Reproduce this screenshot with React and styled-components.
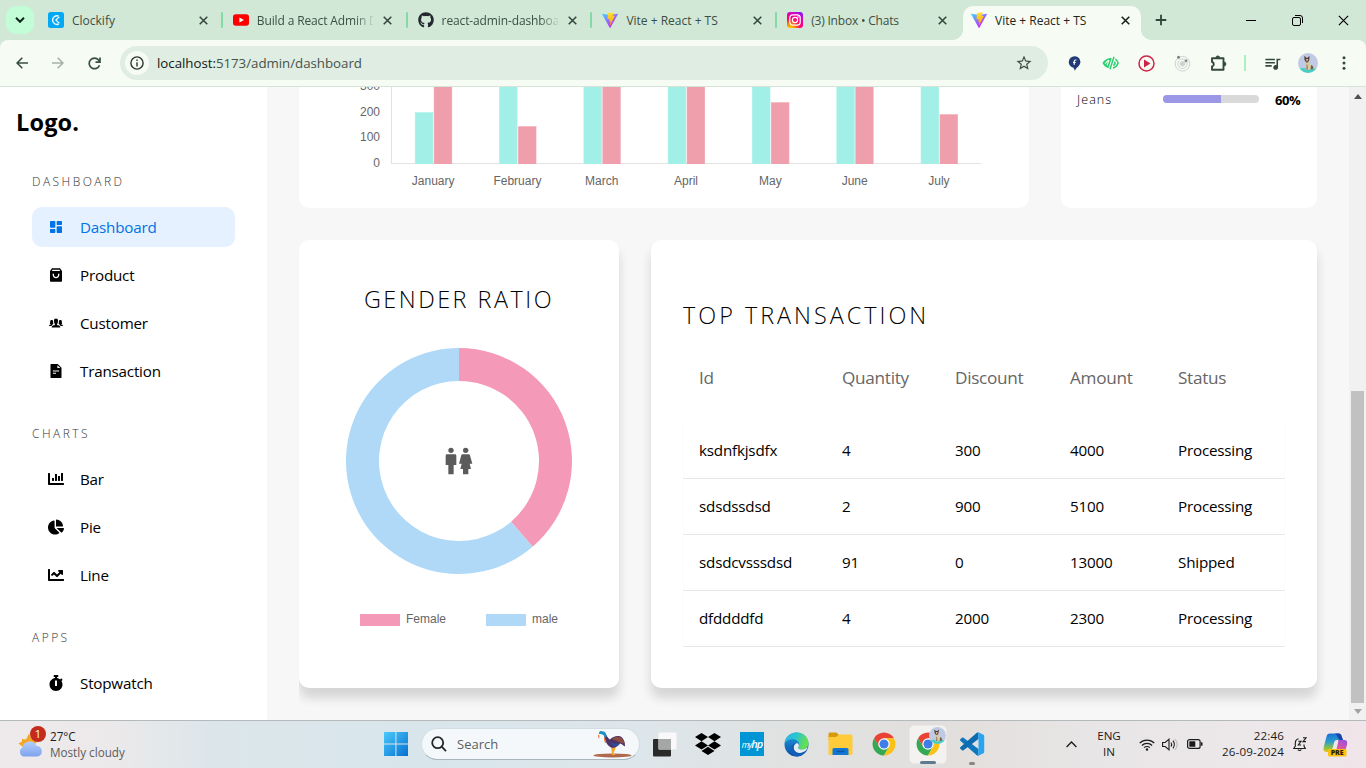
import React from "react";
import styled, { createGlobalStyle, css } from "styled-components";
import { RiDashboardFill, RiShoppingBag3Fill } from "react-icons/ri";
import { IoIosPeople } from "react-icons/io";
import { AiFillFileText } from "react-icons/ai";
import { FaChartBar, FaChartPie, FaChartLine, FaStopwatch, FaGithub, FaDropbox } from "react-icons/fa";
import { BiMaleFemale } from "react-icons/bi";
import { MdStarOutline, MdOutlineQueueMusic } from "react-icons/md";

const GlobalStyle = createGlobalStyle`
  * { box-sizing: border-box; margin: 0; padding: 0; }
  body { margin: 0; overflow: hidden; font-family: "Open Sans", "Noto Sans", sans-serif; }
  svg { display: block; flex: none; }
`;

const Screen = styled.div`
  width: 1366px;
  height: 768px;
  display: flex;
  flex-direction: column;
  overflow: hidden;
  background: #f6fbf4;
`;

const Slot = styled.div`
  flex: none;
  width: ${(p) => p.$w}px;
  display: flex;
  align-items: center;
  justify-content: center;
`;

/* ---------- Browser tabs ---------- */

const TabStrip = styled.div`
  flex: none;
  height: 40px;
  display: flex;
  align-items: center;
  background: #d2e8d6;
  padding-left: 6px;
`;

const TabSearch = styled.div`
  width: 28px;
  height: 28px;
  margin-right: 4px;
  border-radius: 10px;
  background: #c3fdd7;
  display: flex;
  align-items: center;
  justify-content: center;
`;

const TabItem = styled.div`
  position: relative;
  flex: none;
  display: flex;
  align-items: center;
  width: 184.8px;
  height: 40px;
  padding-left: 10px;
  color: #3c4f43;
  ${(p) =>
    p.$active
      ? css`
          width: 178px;
          height: 34px;
          align-self: flex-end;
          margin-left: 1px;
          padding: 0 0 6px 8px;
          background: #f6fbf4;
          border-radius: 10px 10px 0 0;
          color: #1c2620;
          &::before,
          &::after {
            content: "";
            position: absolute;
            bottom: 0;
            width: 10px;
            height: 10px;
          }
          &::before {
            left: -10px;
            background: radial-gradient(circle at 0 0, transparent 9.5px, #f6fbf4 10px);
          }
          &::after {
            right: -10px;
            background: radial-gradient(circle at 100% 0, transparent 9.5px, #f6fbf4 10px);
          }
        `
      : ""}
`;

const TabTitle = styled.span`
  flex: none;
  width: 116px;
  margin: 1px 7px 0 8px;
  font-size: 12px;
  line-height: 18px;
  letter-spacing: ${(p) => p.$ls || 0}px;
  white-space: nowrap;
  ${(p) => p.$fade && css`mask-image: linear-gradient(90deg, #000 84%, transparent 102%);`}
`;

const TabDivider = styled.i`
  width: 2px;
  height: 16px;
  margin-left: auto;
  border-radius: 1px;
  background: #86d9a5;
`;

const WindowControls = styled.div`
  margin-left: auto;
  display: flex;
`;

/* ---------- Browser toolbar ---------- */

const Toolbar = styled.div`
  flex: none;
  height: 47px;
  display: flex;
  align-items: center;
  padding-left: 4px;
  border-bottom: 1px solid #d6e3d8;
  border-radius: 8px 8px 0 0;
  background: #f6fbf4;
`;

const ToolbarBack = styled.div`
  flex: none;
  background: #d2e8d6;
`;

const AddressBar = styled.div`
  flex: none;
  width: 928px;
  height: 34px;
  margin: 0 8px;
  padding: 0 11px 0 5px;
  display: flex;
  align-items: center;
  border-radius: 17px;
  background: #e0ede2;
`;

const SiteInfo = styled.div`
  width: 24px;
  height: 24px;
  border-radius: 50%;
  background: #f6fbf4;
  display: flex;
  align-items: center;
  justify-content: center;
`;

const Url = styled.span`
  flex: 1;
  margin-left: 8px;
  font-size: 13.3px;
  line-height: 20px;
  letter-spacing: -0.03px;
  color: #46544b;
  b { font-weight: 400; color: #111a14; }
`;

const ToolDivider = styled.i`
  width: 2px;
  height: 16px;
  background: #a9f1c1;
`;

/* ---------- Page ---------- */

const Page = styled.div`
  flex: none;
  height: 633px;
  display: flex;
  background: #f7f7f7;
  overflow: hidden;
`;

const Sidebar = styled.aside`
  flex: none;
  width: 267px;
  padding: 19px 32px 0 16px;
  background: #fff;
`;

const Brand = styled.h2`
  height: 33px;
  margin-bottom: 34px;
  font-size: 23.5px;
  line-height: 33px;
  letter-spacing: 0.15px;
  font-weight: 700;
  color: #000;
`;

const NavSection = styled.section`
  padding-left: 16px;
  margin-bottom: 34px;
`;

const NavTitle = styled.h5`
  height: 18px;
  margin-bottom: 16px;
  font-size: 12px;
  line-height: 18px;
  font-weight: 300;
  letter-spacing: 2.45px;
  color: #333;
`;

const NavList = styled.ul`
  list-style: none;
  display: flex;
  flex-direction: column;
  gap: 8px;
`;

const NavItem = styled.li`
  height: 40px;
  padding: 0 16px;
  display: flex;
  align-items: center;
  gap: 16px;
  border-radius: 10px;
  font-size: 15.2px;
  letter-spacing: ${(p) => p.$ls ?? -0.2}px;
  background: ${(p) => (p.$active ? "#e5f1fe" : "transparent")};
  color: ${(p) => (p.$active ? "#0073e6" : "#000")};
  svg { width: 16px; height: 16px; }
`;

const Main = styled.main`
  flex: 1;
  padding: 0 32px;
  display: flex;
  flex-direction: column;
  gap: 32px;
`;

const Row = styled.div`
  display: flex;
  gap: 32px;
`;

const ChartCard = styled.section`
  width: 730px;
  height: 121px;
  border-radius: 0 0 10px 10px;
  background: #fff;
`;

const InventoryCard = styled.section`
  width: 256px;
  height: 121px;
  padding: 2px 16px 0;
  border-radius: 0 0 10px 10px;
  background: #fff;
`;

const InventoryItem = styled.div`
  height: 20px;
  display: flex;
  align-items: center;
  color: #000;
`;

const InventoryName = styled.span`
  width: 86px;
  font-size: 12.5px;
  font-weight: 300;
  letter-spacing: 1.1px;
`;

const Meter = styled.div`
  width: 96px;
  height: 8px;
  border-radius: 4px;
  background: #d9d9d9;
  overflow: hidden;
`;

const MeterFill = styled.div`
  height: 100%;
  background: #9b97e6;
`;

const InventoryValue = styled.b`
  margin: 1px 0 0 16px;
  font-size: 13px;
  letter-spacing: -0.4px;
  font-weight: 700;
`;

const Card = styled.section`
  height: 448px;
  border-radius: 10px;
  background: #fff;
  box-shadow: 0 10px 11px rgba(0, 0, 0, 0.14);
`;

const GenderCard = styled(Card)`
  width: 320px;
  display: flex;
  flex-direction: column;
  align-items: center;
  padding-top: 43px;
  clip-path: inset(-10px -32px -32px 0);
`;

const TransactionCard = styled(Card)`
  width: 666px;
  padding: 59px 32px 0;
`;

const Heading = styled.h2`
  height: 33px;
  font-size: 23.4px;
  line-height: 33px;
  font-weight: 300;
  letter-spacing: ${(p) => p.$ls}px;
  color: #000;
  white-space: nowrap;
`;

const DonutBox = styled.div`
  margin-top: 32px;
  display: grid;
  place-items: center;
  color: #5b5b5b;
  > svg { grid-area: 1 / 1; }
`;

const Legend = styled.div`
  margin-top: 37px;
  display: flex;
  gap: 40px;
  font: 12px/16px "Liberation Sans", Arial, sans-serif;
  color: #666;
`;

const LegendItem = styled.span`
  display: flex;
  align-items: center;
  gap: 6px;
  &::before {
    content: "";
    width: 40px;
    height: 12px;
    margin-top: 2px;
    background: ${(p) => p.$color};
  }
`;

const Table = styled.div`
  margin-top: 26px;
`;

const tableGrid = css`
  display: grid;
  grid-template-columns: 143px 113px 115px 108px 1fr;
  align-items: center;
  padding-left: 16px;
`;

const TableHead = styled.div`
  ${tableGrid}
  height: 41px;
  margin-bottom: 24px;
  padding-bottom: 2px;
  font-size: 17.2px;
  letter-spacing: -0.3px;
  font-weight: 400;
  color: #666;
`;

const TableRow = styled.div`
  ${tableGrid}
  height: 56px;
  border-bottom: 1px solid #e7e7e7;
  border-left: 1px solid #fbfbfb;
  border-right: 1px solid #fbfbfb;
  padding: 0 0 2px 15px;
  font-size: 15.2px;
  letter-spacing: -0.2px;
  color: #000;
`;

const ScrollTrack = styled.div`
  flex: none;
  width: 17px;
  display: flex;
  flex-direction: column;
  align-items: center;
  background: #f1f1f1;
  padding: 7px 0 6px;
`;

const ScrollThumb = styled.div`
  width: 13px;
  height: 312px;
  margin-top: auto;
  margin-bottom: 6px;
  background: #c1c1c1;
`;

/* ---------- Taskbar ---------- */

const Taskbar = styled.footer`
  flex: none;
  height: 48px;
  display: flex;
  align-items: center;
  padding-bottom: 1px;
  border-top: 1px solid #b4b9bb;
  background: linear-gradient(90deg, #eeeaeb 0, #ece9ea 110px, #dce6ea 210px, #d8e6ec 420px, #dde6ea 640px, #e0e2e2 780px, #e2dfdd 960px, #e8e5e6 1090px, #ece8ea 1240px, #f0e5e9 1366px);
`;

const Weather = styled.div`
  position: relative;
  width: 367px;
  padding-left: 18px;
  display: flex;
  align-items: center;
  gap: 7px;
  margin-right: 12px;
`;

const WeatherText = styled.div`
  font-size: 11.7px;
  line-height: 16px;
  color: #1b1b1b;
  small { display: block; font-size: 11.7px; color: #5c5c5c; }
`;

const Badge = styled.span`
  position: absolute;
  left: 30px;
  top: -2px;
  width: 16px;
  height: 16px;
  border-radius: 50%;
  background: #c42b1c;
  color: #fff;
  font-size: 11px;
  line-height: 16px;
  text-align: center;
`;

const SearchPill = styled.div`
  width: 219px;
  height: 32px;
  margin: 0 2px 0 8px;
  padding: 0 6px 0 9px;
  display: flex;
  align-items: center;
  border-radius: 16px;
  border: 1px solid #d3dde1;
  border-bottom-color: #a9b7bd;
  background: #f4f8fa;
  font-size: 13px;
  color: #5c5f61;
  span { flex: 1; margin-left: 10px; }
`;

const AppSlot = styled.div`
  position: relative;
  width: 44px;
  height: 47px;
  display: flex;
  align-items: center;
  justify-content: center;
`;

const ActiveTile = styled.div`
  position: relative;
  width: 38px;
  height: 39px;
  border-radius: 5px;
  background: #f3f2f1;
  border: 1px solid #e9e8e7;
  display: flex;
  align-items: center;
  justify-content: center;
`;

const TileAvatar = styled.div`
  position: absolute;
  right: 0;
  top: 1px;
`;

const Running = styled.i`
  position: absolute;
  left: 50%;
  bottom: ${(p) => p.$b}px;
  width: ${(p) => p.$w}px;
  height: 3px;
  border-radius: 2px;
  transform: translateX(-50%);
  background: ${(p) => p.$color};
`;

const HpTile = styled.div`
  width: 24px;
  height: 24px;
  background: #0096d6;
  color: #fff;
  font-size: 11px;
  line-height: 23px;
  font-style: italic;
  font-weight: 600;
  letter-spacing: -1px;
  text-align: center;
  small { font-size: 8.5px; font-weight: 400; }
`;

const Tray = styled.div`
  margin-left: auto;
  display: flex;
  align-items: center;
  font-size: 11.6px;
  line-height: 16px;
  color: #1b1b1b;
`;

const Language = styled.div`
  width: 50px;
  text-align: center;
`;

const Clock = styled.div`
  width: 75px;
  text-align: right;
  letter-spacing: 0.15px;
`;

/* ---------- Drawings ---------- */

const Close = ({ size = 9, color = "#33453a", w = 1.7 }) => (
  <svg width={size} height={size} viewBox="0 0 10 10" stroke={color} strokeWidth={w} fill="none">
    <path d="M.8.8 9.2 9.2M9.2.8.8 9.2" />
  </svg>
);

const ClockifyIcon = () => (
  <svg width="16" height="16" viewBox="0 0 16 16">
    <rect width="16" height="16" rx="2.5" fill="#03a9f4" />
    <path d="M10.7 4.2A4.3 4.3 0 1 0 10.7 12" fill="none" stroke="#fff" strokeWidth="1.4" />
    <path d="M8.6 7.3 11.4 4.9M8.6 8.9l2.8 2.3" stroke="#fff" strokeWidth="1.2" />
    <circle cx="8.3" cy="8.1" r="1" fill="#fff" />
  </svg>
);

const YoutubeIcon = () => (
  <svg width="16" height="16" viewBox="0 0 16 16">
    <rect y="2.2" width="16" height="11.6" rx="2.8" fill="#f00" />
    <path d="M6.4 5.4v5.2L10.9 8z" fill="#fff" />
  </svg>
);

const ViteIcon = () => (
  <svg width="16" height="16" viewBox="0 0 256 257">
    <defs>
      <linearGradient id="viteA" x1="0" x2=".6" y1=".08" y2=".8">
        <stop offset="0" stopColor="#41d1ff" />
        <stop offset="1" stopColor="#bd34fe" />
      </linearGradient>
      <linearGradient id="viteB" x1=".43" x2=".5" y1=".02" y2=".89">
        <stop offset="0" stopColor="#ffea83" />
        <stop offset=".08" stopColor="#ffdd35" />
        <stop offset="1" stopColor="#ffa800" />
      </linearGradient>
    </defs>
    <path fill="url(#viteA)" d="M255.153 37.938L134.897 252.976c-2.483 4.44-8.862 4.466-11.382.048L.875 37.958c-2.746-4.814 1.371-10.646 6.827-9.67l120.385 21.517a6.537 6.537 0 0 0 2.322-.004l117.867-21.483c5.438-.991 9.574 4.796 6.877 9.62Z" />
    <path fill="url(#viteB)" d="M185.432.063L96.44 17.501a3.268 3.268 0 0 0-2.634 3.014l-5.474 92.456a3.268 3.268 0 0 0 3.997 3.378l24.777-5.718c2.318-.535 4.413 1.507 3.936 3.838l-7.361 36.047c-.495 2.426 1.782 4.5 4.151 3.78l15.304-4.649c2.372-.72 4.652 1.36 4.15 3.788l-11.698 56.621c-.732 3.542 3.979 5.473 5.943 2.437l1.313-2.028l72.516-144.72c1.215-2.423-.88-5.186-3.54-4.672l-25.505 4.922c-2.396.462-4.435-1.77-3.759-4.114l16.646-57.705c.677-2.35-1.37-4.583-3.769-4.113Z" />
  </svg>
);

const InstagramIcon = () => (
  <svg width="16" height="16" viewBox="0 0 16 16">
    <defs>
      <radialGradient id="insta" cx=".2" cy="1.05" r="1.25">
        <stop offset="0" stopColor="#ffd600" />
        <stop offset=".25" stopColor="#ff8a00" />
        <stop offset=".5" stopColor="#ff0169" />
        <stop offset=".75" stopColor="#e800b4" />
        <stop offset="1" stopColor="#7a1bff" />
      </radialGradient>
    </defs>
    <rect width="16" height="16" rx="3" fill="url(#insta)" />
    <g fill="none" stroke="#fff" strokeWidth="1.2">
      <rect x="2.8" y="2.8" width="10.4" height="10.4" rx="3" />
      <circle cx="8" cy="8" r="2.6" />
    </g>
    <circle cx="11" cy="5" r=".8" fill="#fff" />
  </svg>
);

const AvatarIcon = ({ size = 20 }) => (
  <svg width={size} height={size} viewBox="0 0 20 20">
    <defs>
      <clipPath id={`av${size}`}><circle cx="10" cy="10" r="10" /></clipPath>
    </defs>
    <g clipPath={`url(#av${size})`}>
      <rect width="20" height="20" fill="#c0cae4" />
      <path d="M0 16c5-1.500 13-1 20 0v5H0z" fill="#45cfc4" />
      <path d="M8 8c3-1 5.500 3 5.800 8.500L8 17c-1.500-3-1.300-6 0-9z" fill="#d9c9a6" />
      <path d="M6.300 2.800 8.200 4.800h1.600L11.500 2.600 11.300 7 9.800 9.500H8.300L6.500 7z" fill="#4a3d36" />
      <path d="M7.600 6h2.900L9 9z" fill="#d8b283" />
      <path d="M8.600 11.500h.9l.4 5H8.400z" fill="#8d7860" />
      <path d="M13 12c2.500.5 3 2.500 1.500 4.500h-2z" fill="#6b6350" />
    </g>
  </svg>
);

const ChromeIcon = () => (
  <svg width="24" height="24" viewBox="0 0 46 46">
    <g transform="translate(-1 -1)">
      <path fill="#ea4335" d="M4.950 13A22 22 0 0 1 43.050 13H24L14.470 29.500z" />
      <path fill="#34a853" d="M4.950 13 14.470 29.500 33.530 29.500 24 46A22 22 0 0 1 4.950 13z" />
      <path fill="#fbc116" d="M43.050 13A22 22 0 0 1 24 46L33.530 29.500 24 13z" />
      <circle cx="24" cy="24" r="11" fill="#fff" />
      <circle cx="24" cy="24" r="8.700" fill="#3f7ee8" />
    </g>
  </svg>
);

const PuzzleIcon = () => (
  <svg width="17" height="17" viewBox="0 0 17 17">
    <path d="M2 3.200h11.500v11.600H2v-3.300A2.300 2.300 0 0 0 2 7z" fill="none" stroke="#34493c" strokeWidth="1.900" strokeLinejoin="round" />
    <path d="M5.800 2.800a2 2 0 0 1 4 0zM14 6.900a2.100 2.100 0 0 1 0 4.200z" fill="#34493c" stroke="#34493c" strokeWidth=".5" />
  </svg>
);

const WeatherIcon = () => (
  <svg width="25" height="26" viewBox="0 0 25 26">
    <path d="M11 2.500 13 7l6 4-6 6-8-1-4.500-3.500L4 10.500 4 8l4 .5z" fill="#f5a623" />
    <defs>
      <linearGradient id="cloud" x2="0" y2="1">
        <stop offset="0" stopColor="#b4cffb" />
        <stop offset="1" stopColor="#7ea3ee" />
      </linearGradient>
    </defs>
    <path d="M5 25a5 5 0 0 1-.5-9 6 6 0 0 1 5-5.500 6.500 6.500 0 0 1 9 4A5.300 5.300 0 0 1 19.500 25z" fill="url(#cloud)" transform="translate(0 .5)" />
  </svg>
);

const WindowsIcon = () => (
  <svg width="24" height="24" viewBox="0 0 24 24">
    <defs>
      <linearGradient id="win" x2="1" y2="1">
        <stop offset="0" stopColor="#4cc9fb" />
        <stop offset="1" stopColor="#0670d1" />
      </linearGradient>
    </defs>
    <path fill="url(#win)" d="M0 0h11.400v11.400H0zM12.400 0H24v11.400H12.400zM0 12.400h11.400V24H0zM12.400 12.400H24V24H12.400z" />
  </svg>
);

const BirdIcon = () => (
  <svg width="40" height="28" viewBox="0 0 40 28">
    <ellipse cx="19.500" cy="25.400" rx="19" ry="2" fill="#b0694a" />
    <path d="M18 17c.5 3 1 5 1 8h3.500l-2-2 2.500-6z" fill="#f2a925" />
    <path d="M11 4c3 0 3 4 6 5.500C20 6 26 5 29 7.500c2 2 3 5 3 9-2-1-3-2.500-5-3-3 4-6 5-9 4-4-2-6-7-7-12z" fill="#4b3466" />
    <path d="M19 9c3-3 8-3 10.500 0 1 1.500 2 3 2.200 5l-4.500-1.500z" fill="#8a4b40" />
    <path d="M17 12c3 2 7 2 10 1-2 4-8 5-10-1z" fill="#2f4a9f" />
    <path d="M6 3c0-2.500 3-2.500 4-1.500 2.500 0 3.500 2.500 3.500 5L12 8c-1-3-2-4-6-4z" fill="#1f8fc4" />
    <path d="M5.500 4.500c1 .5 1.300 2 .5 4.500L5 6zM11.500 7l2 5-1.500 1-1-4z" fill="#ef6a2b" />
  </svg>
);

const TaskViewIcon = () => (
  <svg width="25" height="26" viewBox="0 0 25 26">
    <rect x="1" y="8" width="18" height="17.500" rx="1" fill="#2a2a2a" />
    <rect x="6.500" y="1.500" width="18" height="17" rx="1" fill="#f9f9f9" />
    <rect x="6.500" y="8" width="12.500" height="10.500" fill="#a5a6a6" />
  </svg>
);

const EdgeIcon = () => (
  <svg width="25" height="25" viewBox="0 0 25 25">
    <defs>
      <linearGradient id="edgeA" x2="1" y2=".3">
        <stop offset="0" stopColor="#2bb5e8" />
        <stop offset=".5" stopColor="#2cc4d0" />
        <stop offset="1" stopColor="#66e04c" />
      </linearGradient>
      <linearGradient id="edgeB" x2="0" y2="1">
        <stop offset="0" stopColor="#1b9de2" />
        <stop offset="1" stopColor="#0c4fa6" />
      </linearGradient>
    </defs>
    <circle cx="12.500" cy="12.500" r="12" fill="url(#edgeB)" />
    <path d="M.6 11.500C1.500 4.500 6.500.5 12.500.5c7 0 12 5 12 10.500 0 4-3 6.500-6.500 6.500-3 0-4.500-1-4-2.200.8-.9 1.200-1.600 1.200-2.800C15 9.500 12 7.300 8.600 7.300 4.800 7.300 2 9 .6 11.500z" fill="url(#edgeA)" />
    <path d="M14 15.300c-.5 1.200 1 2.200 4 2.200 2 0 4-.8 5.200-2.200.4.400.3 1-.2 1.800-1.800 2.700-4.700 4-7.500 3.800-4.500-.3-6.500-4-5.500-7 .5-1.600 1.700-2.600 3-3 1.400.5 2 1.700 2 2.800-.1.800-.5 1-1 1.600z" fill="#e5ebef" />
    <path d="M9.800 14c-1 4 1.500 7.200 6 7.400 2 0 3.800-.6 5.300-1.700-2 3-5.300 4.800-8.600 4.800-5-1-7-6-5.500-9.500 1-2.400 3-3.700 5.500-4-1.500.7-2.400 1.700-2.700 3z" fill="#135fb8" />
  </svg>
);

const FolderIcon = () => (
  <svg width="25" height="24" viewBox="0 0 25 24">
    <path d="M.5 2A1.500 1.500 0 0 1 2 .5h6.500L11 3v5H.5z" fill="#d99a07" />
    <path d="M.5 5H8l3-2.500h12A1.500 1.500 0 0 1 24.500 4v17.500A1.500 1.500 0 0 1 23 23H2a1.500 1.500 0 0 1-1.500-1.500z" fill="#fecb3a" />
    <path d="M4.500 23v-5.500A1.500 1.500 0 0 1 6 16h13a1.500 1.500 0 0 1 1.500 1.500V23z" fill="#1277d2" />
    <path d="M8.500 19.500h8" stroke="#0b56a3" strokeWidth="1.500" />
  </svg>
);

const VscodeIcon = () => (
  <svg width="26" height="26" viewBox="0 0 26 26">
    <path d="M1.300 8.300 3 6.800c.5-.4 1-.4 1.500 0L19.500 18v6.500c-.9.200-1.400 0-2-.5L1.300 9.700c-.4-.4-.4-1 0-1.400z" fill="#0f77bd" />
    <path d="M1.300 17.700 3 19.200c.5.400 1 .4 1.500 0L19.500 8V1.500c-.9-.2-1.400 0-2 .5L1.300 16.300c-.4.400-.4 1 0 1.400z" fill="#0d6cb0" />
    <path d="M17.600 24.700c1 .3 1.300.2 1.800 0l5-2.400c.5-.3.800-.7.800-1.300V5c0-.6-.3-1-.8-1.300l-5-2.400c-.6-.2-1.200-.2-1.800.3.900-.4 1.900.1 1.900 1.200v20.400c0 1.100-1 1.700-1.900 1.500z" fill="#27a4f2" />
  </svg>
);

const CopilotIcon = () => (
  <svg width="26" height="25" viewBox="0 0 26 25">
    <defs>
      <linearGradient id="copA" x1=".4" x2=".4" y2="1">
        <stop offset="0" stopColor="#1b6fd8" />
        <stop offset=".45" stopColor="#2b9fc9" />
        <stop offset=".8" stopColor="#93c33b" />
        <stop offset="1" stopColor="#f2c11b" />
      </linearGradient>
      <linearGradient id="copB" x1=".7" x2=".3" y2="1">
        <stop offset="0" stopColor="#9a52dd" />
        <stop offset=".6" stopColor="#e2569c" />
        <stop offset="1" stopColor="#f98562" />
      </linearGradient>
    </defs>
    <path d="M8 1.500h8.500c2 0 2.600 1 3 2.500L21 8h-6c-2 0-2.500 1-3 3l-2 7c-.5 1.500-1.200 2-3 2H4.500C1.500 20 1 17 2 14L4.500 4.500C5 2.500 6 1.500 8 1.500z" fill="url(#copA)" />
    <path d="M16 8h6.500c3 0 3 3 2.500 5l-2 6c-.7 2-2 3-4 3h-8c2 0 2.500-1.500 3-3l2-8c.3-1.500.3-2.500 0-3z" fill="url(#copB)" />
    <path d="M13 1.500h3.500c2 0 2.600 1 3 2.500L21 8h-3c-2-1-2.500-5-5-6.500z" fill="#1a43a8" />
    <rect x="6" y="17" width="18.500" height="7.500" rx="1.500" fill="#fec20c" />
    <text x="15.200" y="23.300" fontFamily="Open Sans, sans-serif" fontSize="7" fontWeight="800" textAnchor="middle" fill="#2b1d05">PRE</text>
  </svg>
);

/* ---------- Charts ---------- */

const months = [
  ["January", 112, 0],
  ["February", 0, 126],
  ["March", 0, 0],
  ["April", 0, 0],
  ["May", 0, 102],
  ["June", 0, 0],
  ["July", 0, 114],
];

const PAGE_TOP = 87;
const BASE = 163.5 - PAGE_TOP;

const Bar = ({ x, top, color, edge }) => {
  const y = top ? top - PAGE_TOP : -4;
  return (
    <g>
      <rect x={x} y={y} width="18.400" height={BASE + 0.5 - y} fill={edge} />
      <rect x={x + 0.5} y={y + 1} width="17.400" height={BASE - 0.5 - y} fill={color} />
    </g>
  );
};

const BarChart = () => (
  <svg width="730" height="121" viewBox="0 0 730 121" fontFamily="Liberation Sans, Arial, sans-serif" fontSize="12" fill="#666">
    <path d="M92.500 0V76.500M92 76.500H682" stroke="#e2e2e2" fill="none" />
    {[0, 100, 200, 300].map((v) => (
      <text key={v} x="81" y={Math.round(80 - v * 0.2565)} textAnchor="end">{v}</text>
    ))}
    {months.map(([m, a, b], i) => {
      const c = 92.5 + 84.3 * (i + 0.5);
      return (
        <g key={m}>
          <Bar x={c - 18.8} top={a} color="#a1efe6" edge="#bdf4ee" />
          <Bar x={c + 0.1} top={b} color="#ef9fab" edge="#f5bcc4" />
          <text x={c - 0.5} y="98" textAnchor="middle">{m}</text>
        </g>
      );
    })}
  </svg>
);

const Donut = () => (
  <svg width="226" height="226" viewBox="-113 -113 226 226">
    <path d="M0-113A113 113 0 0 1 73.610 85.730L52.110 60.700A80 80 0 0 0 0-80z" fill="#f499b7" />
    <path d="M73.610 85.730A113 113 0 1 1 0-113V-80A80 80 0 1 0 52.110 60.700z" fill="#afd9f7" />
  </svg>
);

/* ---------- Data ---------- */

const tabs = [
  { icon: <ClockifyIcon />, title: "Clockify" },
  { icon: <YoutubeIcon />, title: "Build a React Admin D", fade: true, ls: -0.13 },
  { icon: <FaGithub size={16} color="#24292f" />, title: "react-admin-dashboa", fade: true, ls: -0.12 },
  { icon: <ViteIcon />, title: "Vite + React + TS" },
  { icon: <InstagramIcon />, title: "(3) Inbox • Chats", ls: -0.2 },
  { icon: <ViteIcon />, title: "Vite + React + TS", active: true },
];

const nav = [
  { title: "DASHBOARD", items: [[RiDashboardFill, "Dashboard", true], [RiShoppingBag3Fill, "Product"], [IoIosPeople, "Customer"], [AiFillFileText, "Transaction"]] },
  { title: "CHARTS", items: [[FaChartBar, "Bar"], [FaChartPie, "Pie"], [FaChartLine, "Line"]] },
  { title: "APPS", items: [[FaStopwatch, "Stopwatch"]] },
];

const transactions = [
  ["ksdnfkjsdfx", "4", "300", "4000", "Processing"],
  ["sdsdssdsd", "2", "900", "5100", "Processing"],
  ["sdsdcvsssdsd", "91", "0", "13000", "Shipped"],
  ["dfddddfd", "4", "2000", "2300", "Processing"],
];

export default function App() {
  return (
    <Screen>
      <GlobalStyle />
      <TabStrip>
        <TabSearch>
          <svg width="10" height="6" viewBox="0 0 10 6" fill="none" stroke="#10251a" strokeWidth="2"><path d="M1 .8 5 4.800 9 .8" /></svg>
        </TabSearch>
        {tabs.map((t, i) => (
          <TabItem key={i} $active={t.active}>
            {t.icon}
            <TabTitle $fade={t.fade} $ls={t.ls}>{t.title}</TabTitle>
            <Slot $w={16}><Close color={t.active ? "#15201a" : "#33453a"} /></Slot>
            {i < 4 && <TabDivider />}
          </TabItem>
        ))}
        <Slot $w={40}>
          <svg width="12" height="12" viewBox="0 0 12 12" stroke="#2f4638" strokeWidth="1.800"><path d="M6 .7v10.600M.7 6h10.600" /></svg>
        </Slot>
        <WindowControls>
          <Slot $w={46}><svg width="10" height="10" viewBox="0 0 10 10" stroke="#000"><path d="M0 5.500h10" /></svg></Slot>
          <Slot $w={46}>
            <svg width="11" height="11" viewBox="0 0 11 11" fill="none" stroke="#000"><rect x=".5" y="2.500" width="8" height="8" rx="1.500" /><path d="M3 .5h5A2.500 2.500 0 0 1 10.500 3v5" /></svg>
          </Slot>
          <Slot $w={46}><Close size={11} color="#000" w={1.050} /></Slot>
        </WindowControls>
      </TabStrip>

      <ToolbarBack>
        <Toolbar>
          <Slot $w={36}>
            <svg width="12" height="12" viewBox="0 0 12 12" fill="none" stroke="#3a4f42" strokeWidth="1.600"><path d="M12 6H1.300M6.300.8 1.100 6l5.200 5.200" /></svg>
          </Slot>
          <Slot $w={36}>
            <svg width="12" height="12" viewBox="0 0 12 12" fill="none" stroke="#a6b2aa" strokeWidth="1.600"><path d="M0 6h10.700M5.700.8 10.900 6l-5.200 5.200" /></svg>
          </Slot>
          <Slot $w={36}>
            <svg width="13" height="13" viewBox="0 0 13 13" fill="none" stroke="#3a4f42" strokeWidth="1.700"><path d="M11.500 8.200A5.300 5.300 0 1 1 10.600 3L12 4.600M12 .5v4.600H7.500" /></svg>
          </Slot>
          <AddressBar>
            <SiteInfo>
              <svg width="14" height="14" viewBox="0 0 14 14" fill="none" stroke="#2b3730" strokeWidth="1.400"><circle cx="7" cy="7" r="6.100" /><path d="M7 6.200v4.200M7 3.500v1.500" /></svg>
            </SiteInfo>
            <Url><b>localhost:</b>5173/admin/dashboard</Url>
            <MdStarOutline size={18} color="#3a4f42" style={{ marginRight: 4 }} />
          </AddressBar>
          <Slot $w={36}>
            <svg width="13" height="15" viewBox="0 0 12 15"><path d="M6 .3a5.800 5.800 0 0 1 3.800 10.200C8.500 11.500 7.500 12 6.500 14.700L5 11.800A5.800 5.800 0 0 1 6 .3z" fill="#223a78" /><path d="M8 4H7c-1 0-1.300.6-1.300 1.300v3.500M4.500 6.500h2.700" stroke="#fff" strokeWidth="1.200" fill="none" /></svg>
          </Slot>
          <Slot $w={36}>
            <svg width="17" height="14" viewBox="0 0 17 14">
              <path d="M.5 7C2.500 3.500 5.500 2 9.800 2L6.500 12C4 11.500 2 10 .5 7z" fill="#27cf6c" />
              <path d="M3 7.800 6.300 4M5 9.500l2-5.500" stroke="#f6fbf4" strokeWidth="1.100" fill="none" />
              <path d="M12 .8 8 13.200M13.300 3c1.300.9 2.200 2.200 2.900 4-.9 2.500-2.700 4.300-5.200 5M12.700 5.500c.8 1.500 0 3.200-1.400 4" stroke="#27cf6c" strokeWidth="1.400" fill="none" />
            </svg>
          </Slot>
          <Slot $w={36}>
            <svg width="17" height="17" viewBox="0 0 17 17"><circle cx="8.500" cy="8.500" r="7.500" fill="none" stroke="#cf2449" strokeWidth="1.500" /><path d="M6 4.500v8l6.500-4z" fill="#cf2449" /></svg>
          </Slot>
          <Slot $w={36}>
            <svg width="17" height="17" viewBox="0 0 17 17" fill="none" stroke="#cfd2cf"><circle cx="8.500" cy="8.800" r="7.300" /><circle cx="8.500" cy="8.800" r="4.700" /><circle cx="8.500" cy="8.800" r="2.300" fill="#d2d2d2" /><circle cx="4.500" cy="2.300" r="1.500" fill="#7e807e" stroke="none" /><circle cx="12" cy="5.700" r="1.500" fill="#8d8f8d" stroke="none" /></svg>
          </Slot>
          <Slot $w={36}><PuzzleIcon /></Slot>
          <Slot $w={18}><ToolDivider /></Slot>
          <Slot $w={36}><MdOutlineQueueMusic size={19} color="#34493c" /></Slot>
          <Slot $w={36}><AvatarIcon /></Slot>
          <Slot $w={36}>
            <svg width="4" height="14" viewBox="0 0 4 14" fill="#34493c"><circle cx="2" cy="1.700" r="1.500" /><circle cx="2" cy="7" r="1.500" /><circle cx="2" cy="12.300" r="1.500" /></svg>
          </Slot>
        </Toolbar>
      </ToolbarBack>

      <Page>
        <Sidebar>
          <Brand>Logo.</Brand>
          {nav.map((s) => (
            <NavSection key={s.title}>
              <NavTitle>{s.title}</NavTitle>
              <NavList>
                {s.items.map(([Icon, label, active]) => (
                  <NavItem key={label} $active={active}><Icon />{label}</NavItem>
                ))}
              </NavList>
            </NavSection>
          ))}
        </Sidebar>

        <Main>
          <Row>
            <ChartCard><BarChart /></ChartCard>
            <InventoryCard>
              <InventoryItem>
                <InventoryName>Jeans</InventoryName>
                <Meter><MeterFill style={{ width: "60%" }} /></Meter>
                <InventoryValue>60%</InventoryValue>
              </InventoryItem>
            </InventoryCard>
          </Row>
          <Row>
            <GenderCard>
              <Heading $ls={2.5}>GENDER RATIO</Heading>
              <DonutBox>
                <Donut />
                <BiMaleFemale size={32} />
              </DonutBox>
              <Legend>
                <LegendItem $color="#f499b7">Female</LegendItem>
                <LegendItem $color="#afd9f7">male</LegendItem>
              </Legend>
            </GenderCard>
            <TransactionCard>
              <Heading $ls={3}>TOP TRANSACTION</Heading>
              <Table>
                <TableHead>
                  {["Id", "Quantity", "Discount", "Amount", "Status"].map((h) => <span key={h}>{h}</span>)}
                </TableHead>
                {transactions.map((r) => (
                  <TableRow key={r[0]}>{r.map((c, i) => <span key={i}>{c}</span>)}</TableRow>
                ))}
              </Table>
            </TransactionCard>
          </Row>
        </Main>

        <ScrollTrack>
          <svg width="8" height="5" viewBox="0 0 8 5"><path d="M0 5 4 0l4 5z" fill="#505050" /></svg>
          <ScrollThumb />
          <svg width="8" height="5" viewBox="0 0 8 5"><path d="M0 0h8L4 5z" fill="#a3a3a3" /></svg>
        </ScrollTrack>
      </Page>

      <Taskbar>
        <Weather>
          <WeatherIcon />
          <Badge>1</Badge>
          <WeatherText>27°C<small>Mostly cloudy</small></WeatherText>
        </Weather>
        <Slot $w={34}><WindowsIcon /></Slot>
        <SearchPill>
          <svg width="16" height="16" viewBox="0 0 16 16" fill="none" stroke="#262626" strokeWidth="1.800"><circle cx="6.700" cy="6.700" r="5.500" /><path d="m10.700 10.700 4.300 4.500" /></svg>
          <span>Search</span>
          <BirdIcon />
        </SearchPill>
        <AppSlot><TaskViewIcon /></AppSlot>
        <AppSlot><FaDropbox size={26} color="#000" /></AppSlot>
        <AppSlot><HpTile><small>my</small>hp</HpTile></AppSlot>
        <AppSlot><EdgeIcon /></AppSlot>
        <AppSlot><FolderIcon /></AppSlot>
        <AppSlot><ChromeIcon /></AppSlot>
        <AppSlot>
          <ActiveTile>
            <ChromeIcon />
            <TileAvatar><AvatarIcon size={17} /></TileAvatar>
            <Running $w={16} $b={-1} $color="#5f7c8c" />
          </ActiveTile>
        </AppSlot>
        <AppSlot><VscodeIcon /><Running $w={6} $b={3} $color="#868686" /></AppSlot>

        <Tray>
          <Slot $w={26}><svg width="11" height="7" viewBox="0 0 11 7" fill="none" stroke="#1b1b1b" strokeWidth="1.300"><path d="M.6 6 5.500 1l4.900 5" /></svg></Slot>
          <Language>ENG<br />IN</Language>
          <Slot $w={26}>
            <svg width="16" height="13" viewBox="0 0 16 13" fill="none" stroke="#1b1b1b" strokeWidth="1.200"><path d="M.7 5.200a10.300 10.300 0 0 1 14.600 0M2.900 7.500a7.200 7.200 0 0 1 10.200 0M5.100 9.700a4.100 4.100 0 0 1 5.800 0" /><circle cx="8" cy="11.500" r="1.200" fill="#1b1b1b" stroke="none" /></svg>
          </Slot>
          <Slot $w={20}>
            <svg width="16" height="13" viewBox="0 0 16 13" fill="none" stroke="#1b1b1b" strokeWidth="1.100"><path d="M.6 4.500h2.600L7 1.200v10.600L3.200 8.500H.6z" /><path d="M9 4.500c.8 1.200.8 2.800 0 4M11 2.700c1.700 2.300 1.700 5.300 0 7.600" /><path d="M13 1c2.700 3.300 2.700 7.700 0 11" stroke="#bbb" /></svg>
          </Slot>
          <Slot $w={29}>
            <svg width="16" height="10" viewBox="0 0 16 10"><rect x=".6" y=".6" width="12.500" height="8.800" rx="2" fill="none" stroke="#1b1b1b" strokeWidth="1.200" /><rect x="2.300" y="2.300" width="6" height="5.400" rx=".5" fill="#1b1b1b" /><path d="M14.700 3.300v3.400" stroke="#1b1b1b" strokeWidth="1.600" /></svg>
          </Slot>
          <Clock>22:46<br />26-09-2024</Clock>
          <Slot $w={31}>
            <svg width="14" height="15" viewBox="0 0 14 15" fill="none" stroke="#1b1b1b" strokeWidth="1.100"><path d="M5.500 1.700C3.500 2.200 2.300 4 2.300 6v3L.8 11.500h11.500L11 9V7.500M5 12.500c.4 1.300 2.800 1.300 3.200 0" /><path d="M5.300 4.200h2.800L5.300 8h2.800M10 .8h3L10 4.600h3" /></svg>
          </Slot>
          <Slot $w={40}><CopilotIcon /></Slot>
          <Slot $w={11} />
        </Tray>
      </Taskbar>
    </Screen>
  );
}
